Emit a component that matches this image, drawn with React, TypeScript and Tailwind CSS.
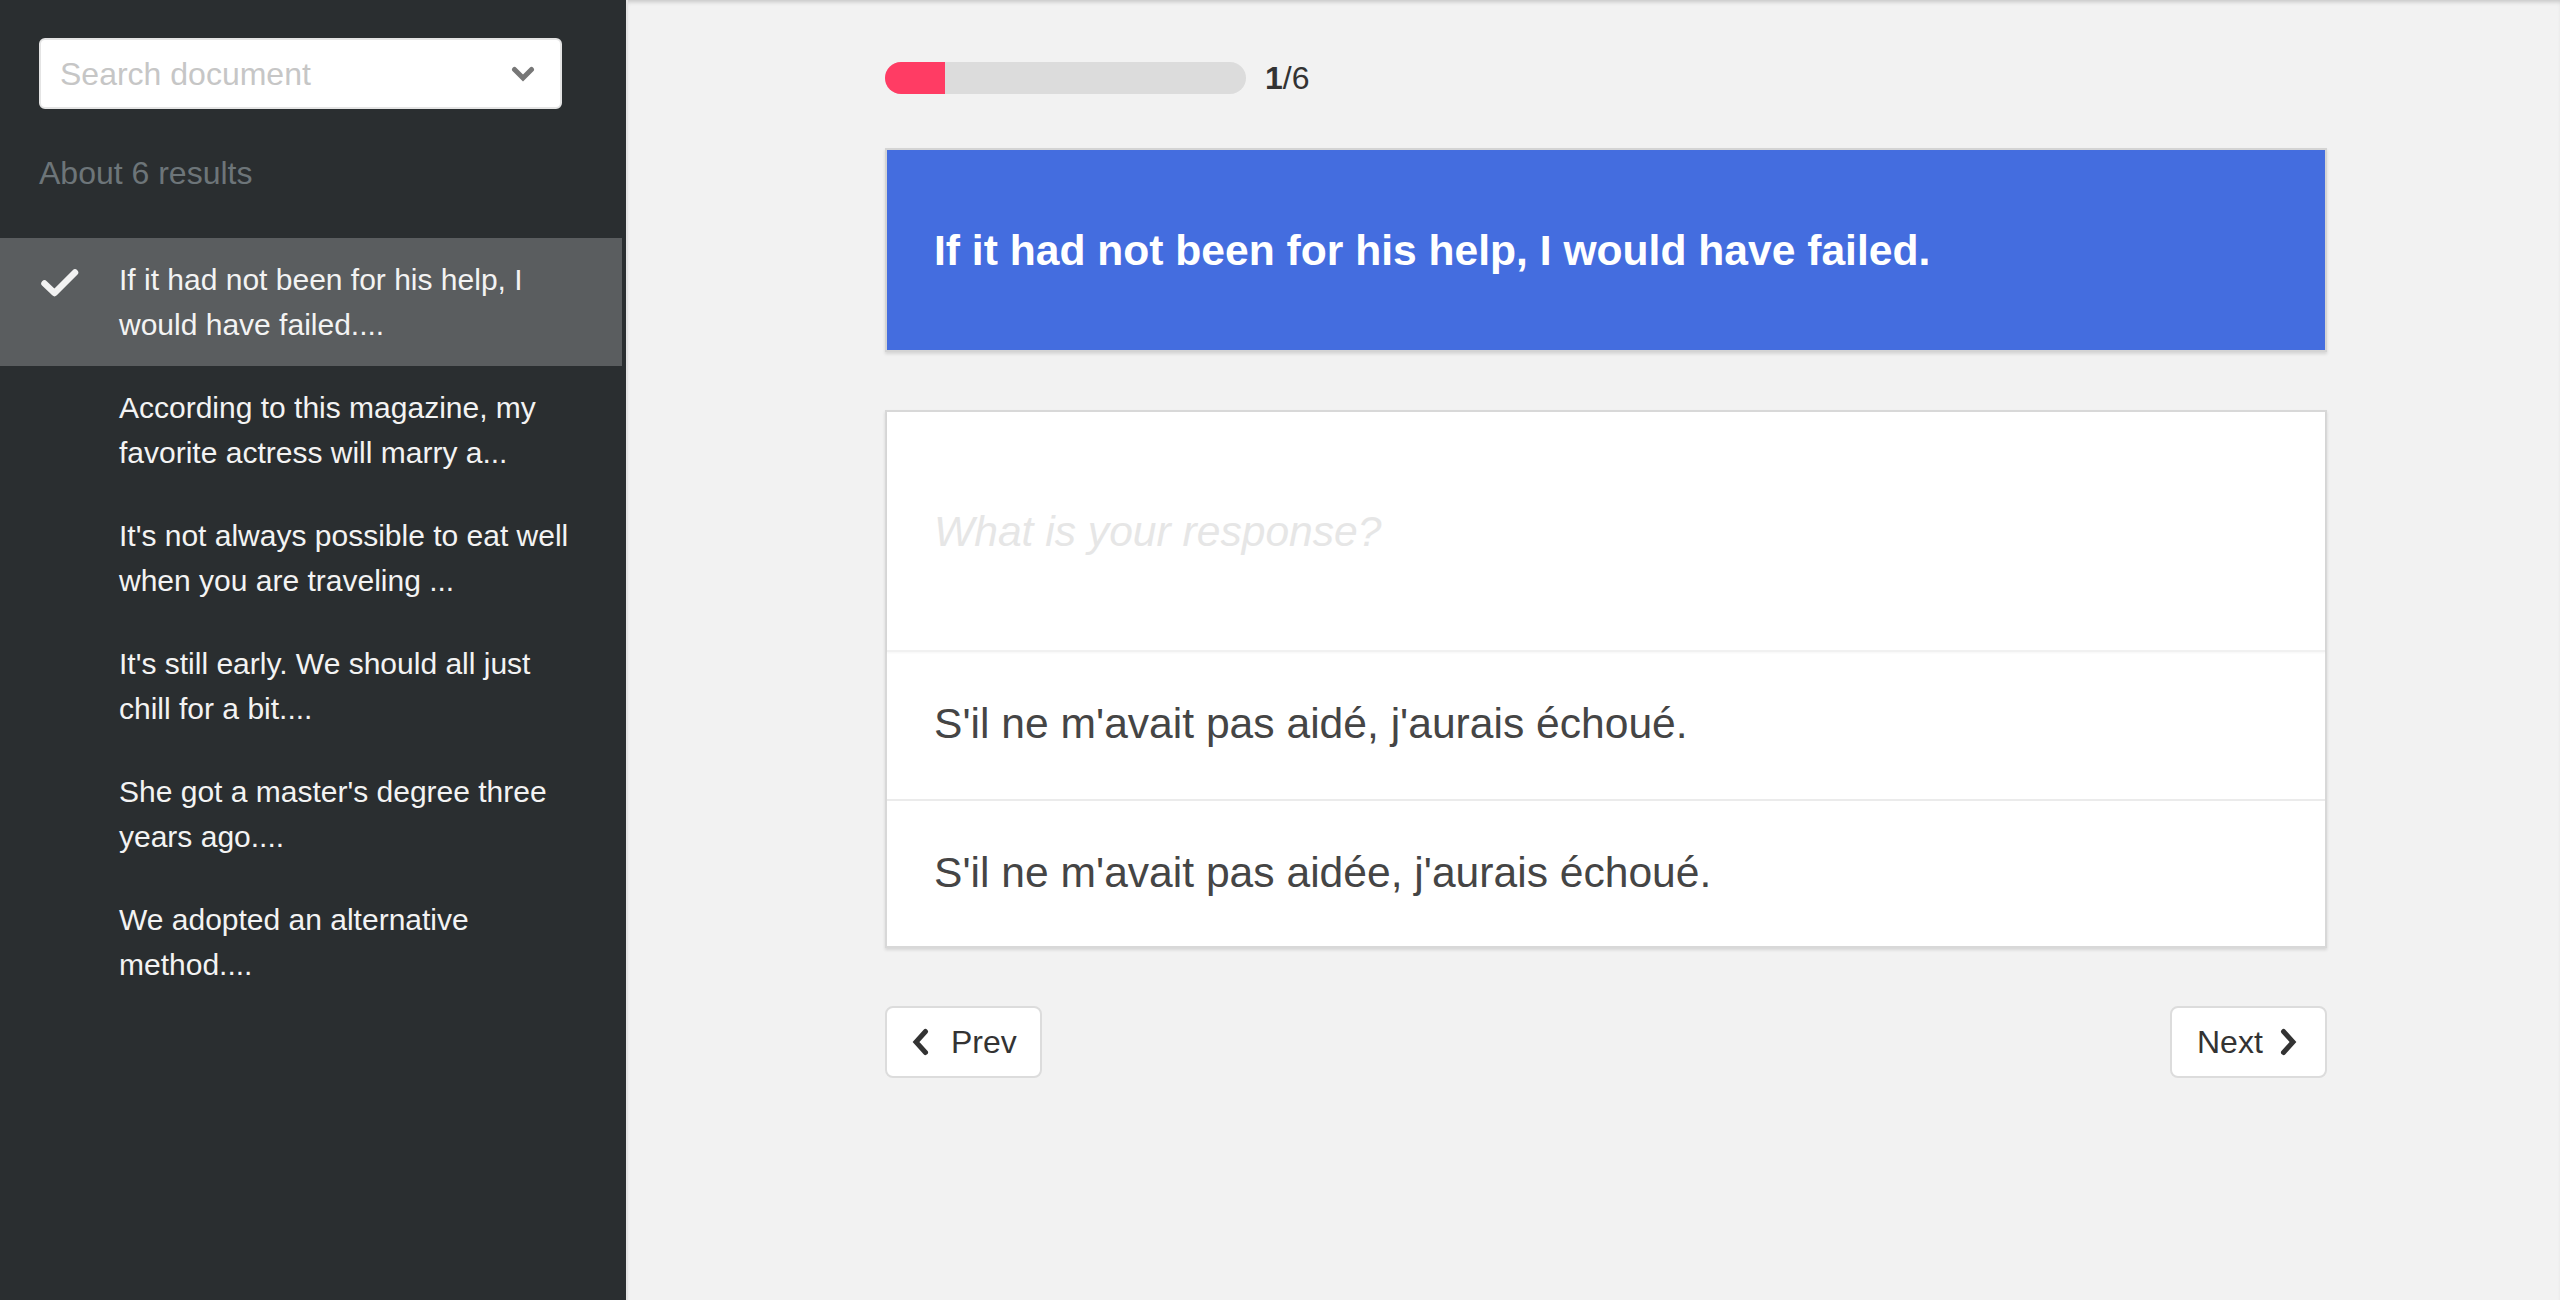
import React from "react";

const items = [
  "If it had not been for his help, I would have failed....",
  "According to this magazine, my favorite actress will marry a...",
  "It's not always possible to eat well when you are traveling ...",
  "It's still early. We should all just chill for a bit....",
  "She got a master's degree three years ago....",
  "We adopted an alternative method....",
];

function ChevronLeft() {
  return (
    <svg width="18" height="28" viewBox="0 0 18 28">
      <polyline points="14.5,3.5 5,14 14.5,24.5" fill="none" stroke="#333" strokeWidth="5" strokeLinecap="round" strokeLinejoin="miter" />
    </svg>
  );
}

function ChevronRight() {
  return (
    <svg width="18" height="28" viewBox="0 0 18 28">
      <polyline points="3.5,3.5 13,14 3.5,24.5" fill="none" stroke="#333" strokeWidth="5" strokeLinecap="round" strokeLinejoin="miter" />
    </svg>
  );
}

export default function App() {
  return (
    <div className="flex h-[1300px] w-[2560px] overflow-hidden font-['Liberation_Sans',Arial,sans-serif]">
      <aside className="w-[628px] shrink-0 bg-[#2a2e30] border-r-2 border-[#e2e2e2]">
        <div className="pl-[39px] pt-[38px]">
          <div className="flex h-[71px] w-[523px] items-center justify-between rounded-[6px] border-2 border-[#e4e4e4] bg-white pl-[19px] pr-[25px]">
            <span className="text-[32px] leading-none text-[#c6c6c6]">Search document</span>
            <svg width="24" height="16" viewBox="0 0 24 16">
              <polyline points="3.5,3.5 12,12 20.5,3.5" fill="none" stroke="#777" strokeWidth="5" strokeLinecap="round" />
            </svg>
          </div>
          <div className="mt-[46px] text-[32px] leading-[36px] text-[#6d7579]">About 6 results</div>
        </div>
        <ul className="mt-[47px] w-[622px]">
          {items.map((t, i) => (
            <li
              key={i}
              className={`flex py-[19px] pl-[40px] ${i === 0 ? "bg-[#5a5d5f]" : ""}`}
            >
              <div className="flex h-[45px] w-[79px] shrink-0 items-center">
                {i === 0 && (
                  <svg width="40" height="30" viewBox="0 0 40 30" className="mt-[6px]">
                    <polyline points="4.5,15.5 14.5,25 35,4.5" fill="none" stroke="#f2f2f2" strokeWidth="6.5" strokeLinecap="round" strokeLinejoin="round" />
                  </svg>
                )}
              </div>
              <div className="w-[460px] text-[30px] leading-[45px] text-[#f3f3f3]">{t}</div>
            </li>
          ))}
        </ul>
      </aside>
      <main className="flex-1 bg-[#f2f2f2] shadow-[inset_0_4px_4px_-2px_rgba(0,0,0,0.18)] pl-[257px] pt-[62px]">
        <div className="flex items-center gap-[19px]">
          <div className="h-[32px] w-[361px] overflow-hidden rounded-full bg-[#dcdcdc]">
            <div className="h-full w-[60px] bg-[#ff3c64]" />
          </div>
          <span className="text-[32px] leading-none text-[#333]">
            <b>1</b>/6
          </span>
        </div>

        <div className="mt-[54px] flex h-[204px] w-[1442px] items-center border-2 border-[#d4d4d4] bg-[#446ddf] pl-[47px] shadow-[0_2px_3px_rgba(0,0,0,0.12)]">
          <h1 className="text-[42.6px] font-bold leading-none text-white">
            If it had not been for his help, I would have failed.
          </h1>
        </div>

        <div className="mt-[58px] w-[1442px] border-2 border-[#d8d8d8] bg-white shadow-[0_2px_3px_rgba(0,0,0,0.12)]">
          <div className="flex h-[240px] items-center border-b-2 border-[#f1f1f1] pl-[47px] shadow-[0_1px_2px_rgba(0,0,0,0.04)]">
            <span className="text-[42.6px] italic leading-none text-[#e6e6e6]">What is your response?</span>
          </div>
          <div className="flex h-[147px] items-center pb-[4px] pl-[47px] text-[42.6px] leading-none text-[#454545]">
            S'il ne m'avait pas aidé, j'aurais échoué.
          </div>
          <div className="flex h-[147px] items-center border-t-2 border-[#ebebeb] pb-[3px] pl-[47px] text-[42.6px] leading-none text-[#454545]">
            S'il ne m'avait pas aidée, j'aurais échoué.
          </div>
        </div>

        <div className="mt-[58px] flex w-[1442px] justify-between">
          <button className="flex h-[72px] w-[157px] items-center rounded-[8px] border-2 border-[#dcdcdc] bg-white pl-[24px]">
            <ChevronLeft />
            <span className="ml-[22px] text-[32px] leading-none text-[#333]">Prev</span>
          </button>
          <button className="flex h-[72px] w-[157px] items-center rounded-[8px] border-2 border-[#dcdcdc] bg-white pl-[25px]">
            <span className="text-[32px] leading-none text-[#333]">Next</span>
            <span className="ml-[17px] flex">
              <ChevronRight />
            </span>
          </button>
        </div>
      </main>
    </div>
  );
}
